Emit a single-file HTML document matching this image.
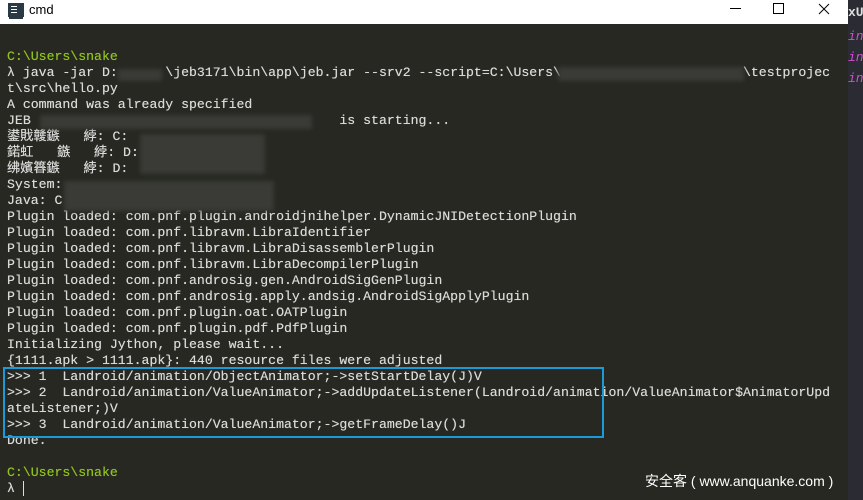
<!DOCTYPE html>
<html><head><meta charset="utf-8"><style>
body{margin:0;width:863px;height:500px;overflow:hidden;background:#272822;position:relative;font-family:"Liberation Mono","Noto Sans CJK SC",monospace}
.tb{position:absolute;left:0;top:0;width:848px;height:24px;background:#fff;font-family:"Liberation Sans",sans-serif;font-size:13px;color:#000}
.side{position:absolute;left:848px;top:0;width:15px;height:500px;background:#2a2b33}
.term{position:absolute;left:7px;top:49px;font-size:13.2px;line-height:16px;color:#dadada;white-space:pre;text-shadow:0 0 0.4px #dadada}
.g{color:#8fc31f;text-shadow:0 0 0.4px #8fc31f}
.blur{position:absolute;background:#3a3a36;filter:blur(2px)}
.box{position:absolute;left:3px;top:367px;width:597px;height:67px;border:2px solid #1a9ad6}
.wm{position:absolute;left:645px;top:471px;color:#fff;font-family:"Liberation Sans","Noto Sans CJK SC",sans-serif;font-size:14px}
</style></head><body>
<div class="tb">
<div style="position:absolute;left:8px;top:3px;width:14px;height:12px;background:#2a3a44;border:1px solid #2a3a44"></div>
<div style="position:absolute;left:11px;top:6px;width:6px;height:1px;background:#fff;box-shadow:0 3px 0 #fff,0 6px 0 #fff"></div>
<div style="position:absolute;left:9px;top:17px;width:14px;height:2px;background:#2a3a44"></div>
<span style="position:absolute;left:29px;top:2px;font-size:13px">cmd</span>
<div style="position:absolute;left:730px;top:8px;width:11px;height:1px;background:#000"></div>
<div style="position:absolute;left:773px;top:3px;width:9px;height:9px;border:1px solid #000"></div>
<svg style="position:absolute;left:818px;top:3px" width="12" height="12"><path d="M1 1L11 11M11 1L1 11" stroke="#000" stroke-width="1"/></svg>
</div>
<div class="side">
<div style="position:absolute;left:0;top:5px;color:#ddd;font:bold 13px 'Liberation Mono',monospace">xU</div>
<div style="position:absolute;left:0;top:26px;color:#d050d0;font:italic 13px 'Liberation Mono',monospace;line-height:21px">in<br>in<br>in</div>
</div>
<div class="term"><span class="g">C:\Users\snake</span>
λ java -jar D:      \jeb3171\bin\app\jeb.jar --srv2 --script=C:\Users\                       \testprojec
t\src\hello.py
A command was already specified
JEB                                       is starting...
鍙戝竷鏃   綍: C:
鍩虹   鏃   綍: D:
绋嬪簭鏃   綍: D:
System:
Java: C
Plugin loaded: com.pnf.plugin.androidjnihelper.DynamicJNIDetectionPlugin
Plugin loaded: com.pnf.libravm.LibraIdentifier
Plugin loaded: com.pnf.libravm.LibraDisassemblerPlugin
Plugin loaded: com.pnf.libravm.LibraDecompilerPlugin
Plugin loaded: com.pnf.androsig.gen.AndroidSigGenPlugin
Plugin loaded: com.pnf.androsig.apply.andsig.AndroidSigApplyPlugin
Plugin loaded: com.pnf.plugin.oat.OATPlugin
Plugin loaded: com.pnf.plugin.pdf.PdfPlugin
Initializing Jython, please wait...
{1111.apk &gt; 1111.apk}: 440 resource files were adjusted
&gt;&gt;&gt; 1  Landroid/animation/ObjectAnimator;-&gt;setStartDelay(J)V
&gt;&gt;&gt; 2  Landroid/animation/ValueAnimator;-&gt;addUpdateListener(Landroid/animation/ValueAnimator$AnimatorUpd
ateListener;)V
&gt;&gt;&gt; 3  Landroid/animation/ValueAnimator;-&gt;getFrameDelay()J
Done.

<span class="g">C:\Users\snake</span>
λ <span style="border-left:1.5px solid #ddd"> </span></div>
<div class="blur" style="left:118px;top:69px;width:44px;height:12px"></div>
<div class="blur" style="left:558px;top:67px;width:186px;height:14px"></div>
<div class="blur" style="left:40px;top:115px;width:272px;height:14px"></div>
<div class="blur" style="left:140px;top:134px;width:125px;height:40px"></div>
<div class="blur" style="left:64px;top:181px;width:210px;height:30px"></div>
<div class="box"></div>
<div class="wm">安全客 ( www.anquanke.com )</div>
</body></html>
